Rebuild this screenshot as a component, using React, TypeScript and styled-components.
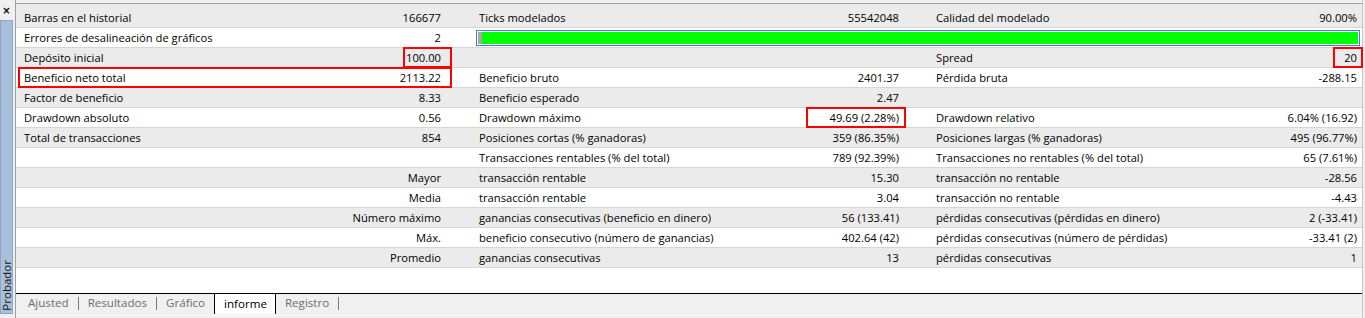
import React from 'react';
import styled, { createGlobalStyle } from 'styled-components';

const GlobalStyle = createGlobalStyle`
  html, body { margin: 0; padding: 0; background: #f0f0f0; }
  body {
    font-family: "Open Sans", "Noto Sans", sans-serif;
    font-size: 11.2px;
    color: #000;
  }
`;

const Frame = styled.div`
  display: flex;
  width: 1365px;
  height: 318px;
  background: #f0f0f0;
  overflow: hidden;
`;

const Sidebar = styled.div`
  flex: none;
  width: 15px;
  display: flex;
  flex-direction: column;
  border-right: 1px solid #a0a0a0;
  padding-bottom: 4px;
`;

const CloseBox = styled.div`
  height: 20px;
  width: 13px;
  display: flex;
  align-items: center;
  justify-content: center;
  font-family: "DejaVu Sans", sans-serif;
  font-size: 10px;
  font-weight: bold;
`;

const SideTab = styled.div`
  flex: 1;
  width: 11px;
  background: #a9c0dc;
  border: 1px solid #8ea6c4;
  display: flex;
  align-items: flex-end;
  justify-content: center;
  overflow: visible;
`;

const SideLabel = styled.span`
  writing-mode: vertical-rl;
  transform: rotate(180deg);
  font-size: 11.5px;
  line-height: 11px;
  color: #151515;
  padding-top: 2px;
  white-space: nowrap;
`;

const Main = styled.div`
  flex: 1;
  display: flex;
  flex-direction: column;
  border-right: 1px solid #c8c8c8;
  margin-right: 2px;
  background: #fff;
  min-width: 0;
`;

const TopEdge = styled.div`
  flex: none;
  height: 3px;
  background: #f0f0f0;
  border-bottom: 1px solid #a0a0a0;
`;

const Table = styled.div`
  flex: none;
  padding-top: 4px;
  background: #ebebeb;
`;

const Row = styled.div<{ $alt: boolean }>`
  position: relative;
  display: grid;
  grid-template-columns: 456px 457px 1fr;
  height: 20px;
  box-sizing: border-box;
  border-bottom: 1px solid #d6d6d6;
  background: ${(p) => (p.$alt ? '#ffffff' : '#ebebeb')};
  line-height: 20px;
`;

const Group = styled.div<{ $padL: number; $padR: number }>`
  display: flex;
  justify-content: space-between;
  padding: 0 ${(p) => p.$padR}px 0 ${(p) => p.$padL}px;
  white-space: nowrap;
  min-width: 0;
  height: 19px;
`;

const Label = styled.span``;

const Value = styled.span`
  margin-left: auto;
  text-align: right;
`;

const BarCell = styled.div`
  grid-column: 2 / 4;
  padding: 2px 2px 1px 4px;
  display: flex;
  height: 19px;
  box-sizing: border-box;
`;

const Bar = styled.div`
  flex: 1;
  display: flex;
  border: 1px solid #3c83c8;
  background: #fff;
  padding: 1px;
`;

const BarGrey = styled.div`
  width: 4px;
  background: #a8a8a8;
`;

const BarFill = styled.div`
  flex: 1;
  background: #00ff00;
`;

const Highlight = styled.div<{ $left: number; $width: number }>`
  position: absolute;
  top: -1px;
  bottom: -1px;
  left: ${(p) => p.$left}px;
  width: ${(p) => p.$width}px;
  border: 2px solid #ff0000;
  box-sizing: border-box;
  pointer-events: none;
`;

const Filler = styled.div`
  flex: 1;
  background: #fff;
`;

const TabBar = styled.div`
  flex: none;
  height: 21px;
  display: flex;
  align-items: flex-start;
  padding-left: 3px;
  border-top: 1px solid #000;
  background: #f0f0f0;
`;

const Tab = styled.div<{ $active?: boolean }>`
  height: ${(p) => (p.$active ? '21px' : '20px')};
  line-height: 18px;
  padding: ${(p) => (p.$active ? '1px 8px 0 9px' : '0 9px')};
  margin-top: ${(p) => (p.$active ? '-1px' : '0')};
  border: ${(p) => (p.$active ? '1px solid #000' : 'none')};
  border-bottom: none;
  box-sizing: border-box;
  background: ${(p) => (p.$active ? '#fff' : 'transparent')};
  color: ${(p) => (p.$active ? '#000' : '#6d6d6d')};
  font-size: 11.6px;
`;

const Sep = styled.div`
  width: 1px;
  height: 13px;
  margin-top: 3px;
  background: #7a7a7a;
`;

const BottomEdge = styled.div`
  flex: none;
  height: 3px;
  background: #f0f0f0;
  border-top: 1px solid #fbfbfb;
  box-sizing: border-box;
`;

type Cell = [string, string];
type RowData = { cells: Cell[]; bar?: boolean; marks?: { left: number; width: number }[] };

const rows: RowData[] = [
  { cells: [['Barras en el historial', '166677'], ['Ticks modelados', '55542048'], ['Calidad del modelado', '90.00%']] },
  { cells: [['Errores de desalineación de gráficos', '2']], bar: true },
  {
    cells: [['Depósito inicial', '100.00'], ['', ''], ['Spread', '20']],
    marks: [{ left: 387, width: 49 }, { left: 1317, width: 30 }],
  },
  {
    cells: [['Beneficio neto total', '2113.22'], ['Beneficio bruto', '2401.37'], ['Pérdida bruta', '-288.15']],
    marks: [{ left: 2, width: 434 }],
  },
  { cells: [['Factor de beneficio', '8.33'], ['Beneficio esperado', '2.47'], ['', '']] },
  {
    cells: [['Drawdown absoluto', '0.56'], ['Drawdown máximo', '49.69 (2.28%)'], ['Drawdown relativo', '6.04% (16.92)']],
    marks: [{ left: 790, width: 100 }],
  },
  { cells: [['Total de transacciones', '854'], ['Posiciones cortas (% ganadoras)', '359 (86.35%)'], ['Posiciones largas (% ganadoras)', '495 (96.77%)']] },
  { cells: [['', ''], ['Transacciones rentables (% del total)', '789 (92.39%)'], ['Transacciones no rentables (% del total)', '65 (7.61%)']] },
  { cells: [['', 'Mayor'], ['transacción rentable', '15.30'], ['transacción no rentable', '-28.56']] },
  { cells: [['', 'Media'], ['transacción rentable', '3.04'], ['transacción no rentable', '-4.43']] },
  { cells: [['', 'Número máximo'], ['ganancias consecutivas (beneficio en dinero)', '56 (133.41)'], ['pérdidas consecutivas (pérdidas en dinero)', '2 (-33.41)']] },
  { cells: [['', 'Máx.'], ['beneficio consecutivo (número de ganancias)', '402.64 (42)'], ['pérdidas consecutivas (número de pérdidas)', '-33.41 (2)']] },
  { cells: [['', 'Promedio'], ['ganancias consecutivas', '13'], ['pérdidas consecutivas', '1']] },
];

const pads: [number, number][] = [
  [8, 31],
  [7, 30],
  [7, 5],
];

export default function App() {
  return (
    <>
      <GlobalStyle />
      <Frame>
        <Sidebar>
          <CloseBox>×</CloseBox>
          <SideTab>
            <SideLabel>Probador</SideLabel>
          </SideTab>
        </Sidebar>
        <Main>
          <TopEdge />
          <Table>
            {rows.map((r, i) => (
              <Row key={i} $alt={i % 2 === 1}>
                {r.cells.map((c, j) => (
                  <Group key={j} $padL={pads[j][0]} $padR={pads[j][1]}>
                    <Label>{c[0]}</Label>
                    <Value>{c[1]}</Value>
                  </Group>
                ))}
                {r.bar && (
                  <BarCell>
                    <Bar>
                      <BarGrey />
                      <BarFill />
                    </Bar>
                  </BarCell>
                )}
                {r.marks?.map((m, k) => (
                  <Highlight key={k} $left={m.left} $width={m.width} />
                ))}
              </Row>
            ))}
          </Table>
          <Filler />
          <TabBar>
            <Tab>Ajusted</Tab>
            <Sep />
            <Tab>Resultados</Tab>
            <Sep />
            <Tab>Gráfico</Tab>
            <Tab $active>informe</Tab>
            <Tab>Registro</Tab>
            <Sep />
          </TabBar>
          <BottomEdge />
        </Main>
      </Frame>
    </>
  );
}
